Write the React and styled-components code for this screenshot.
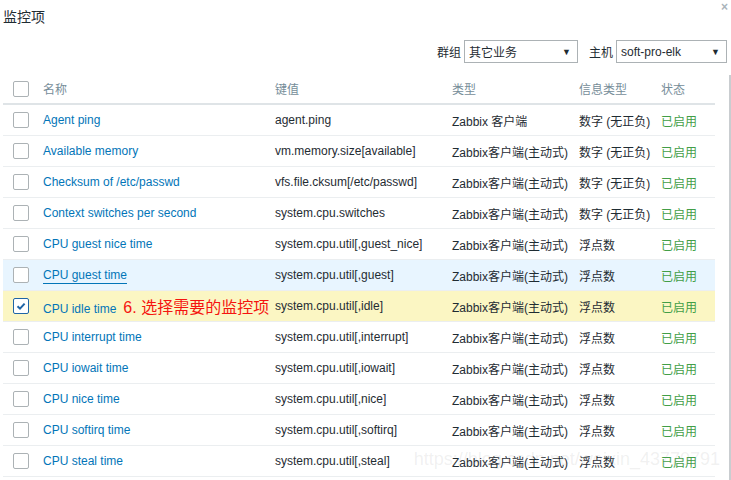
import React from 'react';
import styled, { createGlobalStyle } from 'styled-components';

const GlobalStyle = createGlobalStyle`
    body {
        margin: 0;
        background: #fff;
        font-family: "Liberation Sans", Arial, "Noto Sans CJK SC", sans-serif;
        font-size: 12px;
        color: #1f2c33;
    }
`;

const Page = styled.div`
    position: relative;
    width: 731px;
    height: 480px;
    overflow: hidden;
    padding: 0 0 0 3px;
    box-sizing: border-box;
`;

const TitleBar = styled.div`
    display: flex;
    justify-content: space-between;
    align-items: flex-start;
    height: 40px;
`;

const Title = styled.h4`
    margin: 9px 0 0;
    font-size: 14px;
    font-weight: normal;
    line-height: 16px;
    color: #1f2c33;
`;

const Close = styled.span`
    margin: 1px 3px 0 0;
    color: #aab4bb;
    font-size: 12px;
    font-weight: bold;
    line-height: 12px;
`;

const Filter = styled.div`
    display: flex;
    justify-content: flex-end;
    align-items: center;
    gap: 3px;
    padding-right: 4px;
    height: 23px;
`;

const Label = styled.span`
    margin-left: ${p => p.$first ? 0 : 8}px;
`;

const Select = styled.div`
    display: flex;
    justify-content: space-between;
    align-items: center;
    box-sizing: border-box;
    width: ${p => p.$w}px;
    height: 23px;
    padding: 0 6px 0 4px;
    border: 1px solid #acb2b5;
    background: #fff;
`;

const Arrow = styled.span`
    font-size: 9px;
    color: #1f2c33;
`;

const Table = styled.div`
    margin-top: 11px;
    width: 712px;
`;

const Row = styled.div`
    display: grid;
    grid-template-columns: 40px 232px 177px 127px 82px 54px;
    align-items: center;
    height: 31px;
    box-sizing: border-box;
    border-bottom: ${p => p.$head ? '2px solid #dfe4e7' : '1px solid #ebeef0'};
    background: ${p => p.$bg || 'transparent'};
    color: ${p => p.$head ? '#768d99' : '#1f2c33'};
    white-space: nowrap;
`;

const Cell = styled.div`
    overflow: visible;
`;

const Box = styled.span`
    display: block;
    margin-left: 10px;
    width: 16px;
    height: 16px;
    box-sizing: border-box;
    border: 1px solid ${p => p.$checked ? '#1f65a6' : '#acb2b5'};
    border-radius: 2px;
    background: #fff;
    svg { display: block; }
`;

const Name = styled.a`
    color: #0275b8;
    text-decoration: none;
    border-bottom: ${p => p.$hover ? '1px solid #0275b8' : 'none'};
    padding-bottom: 1px;
`;

const Note = styled.span`
    margin-left: 7px;
    color: #f5140f;
    font-size: 16px;
`;

const Status = styled.span`
    color: #429e47;
`;

const Scroll = styled.div`
    position: absolute;
    right: 0;
    top: 75px;
    bottom: 0;
    width: 2px;
    background: #c9cdd0;
`;

const Watermark = styled.div`
    position: absolute;
    right: 11px;
    top: 449px;
    font-size: 18px;
    color: rgba(150, 150, 150, 0.14);
    pointer-events: none;
`;

const items = [
    ['Agent ping', 'agent.ping', 'Zabbix 客户端', '数字 (无正负)'],
    ['Available memory', 'vm.memory.size[available]', 'Zabbix客户端(主动式)', '数字 (无正负)'],
    ['Checksum of /etc/passwd', 'vfs.file.cksum[/etc/passwd]', 'Zabbix客户端(主动式)', '数字 (无正负)'],
    ['Context switches per second', 'system.cpu.switches', 'Zabbix客户端(主动式)', '数字 (无正负)'],
    ['CPU guest nice time', 'system.cpu.util[,guest_nice]', 'Zabbix客户端(主动式)', '浮点数'],
    ['CPU guest time', 'system.cpu.util[,guest]', 'Zabbix客户端(主动式)', '浮点数', 'hover'],
    ['CPU idle time', 'system.cpu.util[,idle]', 'Zabbix客户端(主动式)', '浮点数', 'checked'],
    ['CPU interrupt time', 'system.cpu.util[,interrupt]', 'Zabbix客户端(主动式)', '浮点数'],
    ['CPU iowait time', 'system.cpu.util[,iowait]', 'Zabbix客户端(主动式)', '浮点数'],
    ['CPU nice time', 'system.cpu.util[,nice]', 'Zabbix客户端(主动式)', '浮点数'],
    ['CPU softirq time', 'system.cpu.util[,softirq]', 'Zabbix客户端(主动式)', '浮点数'],
    ['CPU steal time', 'system.cpu.util[,steal]', 'Zabbix客户端(主动式)', '浮点数'],
];

function Check({ checked }) {
    return (
        <Box $checked={checked}>
            {checked && (
                <svg width="14" height="14" viewBox="0 0 14 14">
                    <path d="M3.5 7.2 L6 9.6 L10.6 4.6" fill="none" stroke="#1f65a6" strokeWidth="2" />
                </svg>
            )}
        </Box>
    );
}

export default function App() {
    return (
        <Page>
            <GlobalStyle />
            <TitleBar>
                <Title>监控项</Title>
                <Close>×</Close>
            </TitleBar>
            <Filter>
                <Label $first>群组</Label>
                <Select $w={114}>其它业务<Arrow>▼</Arrow></Select>
                <Label>主机</Label>
                <Select $w={111}>soft-pro-elk<Arrow>▼</Arrow></Select>
            </Filter>
            <Table>
                <Row $head>
                    <Cell><Check /></Cell>
                    <Cell>名称</Cell>
                    <Cell>键值</Cell>
                    <Cell>类型</Cell>
                    <Cell>信息类型</Cell>
                    <Cell>状态</Cell>
                </Row>
                {items.map(([name, key, type, info, state]) => (
                    <Row key={key} $bg={state === 'hover' ? '#e8f5ff' : state === 'checked' ? '#fbf6c3' : null}>
                        <Cell><Check checked={state === 'checked'} /></Cell>
                        <Cell>
                            <Name $hover={state === 'hover'}>{name}</Name>
                            {state === 'checked' && <Note>6. 选择需要的监控项</Note>}
                        </Cell>
                        <Cell>{key}</Cell>
                        <Cell>{type}</Cell>
                        <Cell>{info}</Cell>
                        <Cell><Status>已启用</Status></Cell>
                    </Row>
                ))}
            </Table>
            <Scroll />
            <Watermark>https://blog.csdn.net/weixin_43770791</Watermark>
        </Page>
    );
}
